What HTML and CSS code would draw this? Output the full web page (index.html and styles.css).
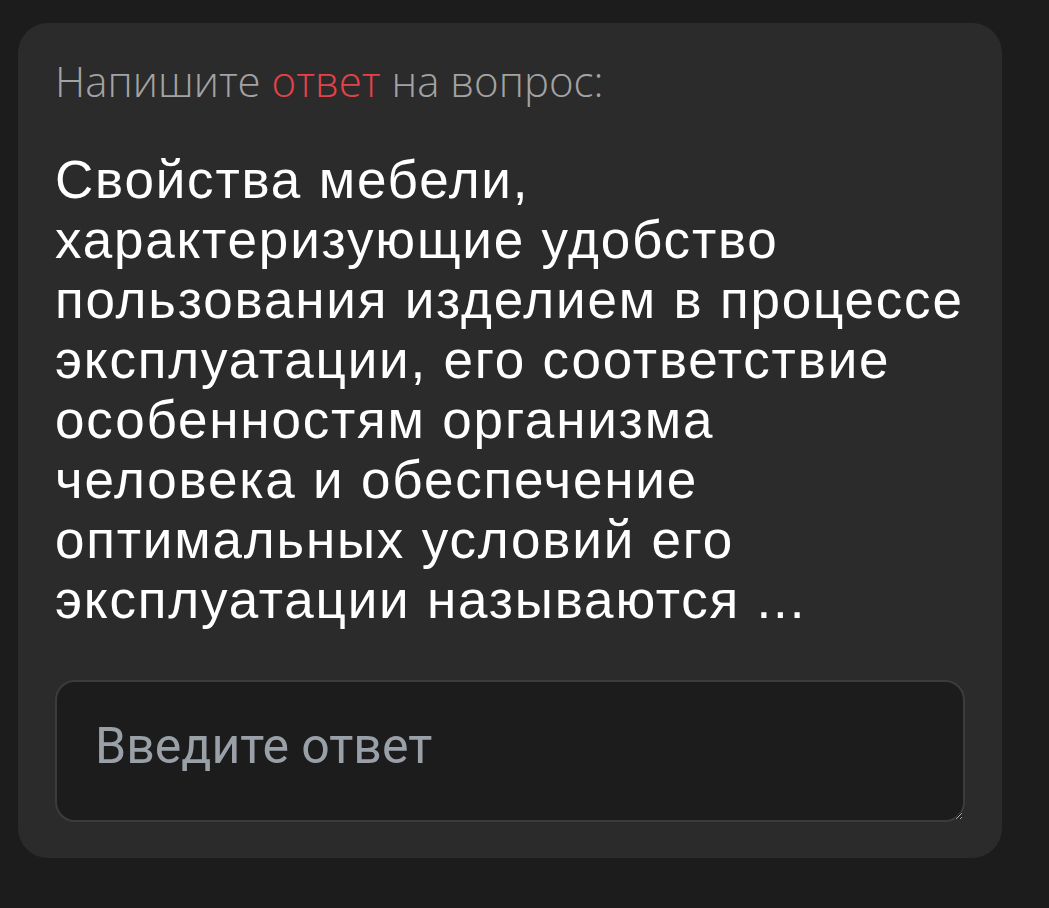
FILE: index.html
```html
<!DOCTYPE html>
<html lang="ru">
<head>
    <meta charset="UTF-8">
    <meta name="viewport" content="width=device-width, initial-scale=1.0">
    <title>Вопрос</title>
    <link rel="stylesheet" href="styles.css">
</head>
<body>
    <div class="card">
        <div class="hint">Напишите <span class="accent">ответ</span> на вопрос:</div>
        <div class="question">Свойства мебели,<br>характеризующие удобство<br>пользования изделием в процессе<br>эксплуатации, его соответствие<br>особенностям организма<br>человека и обеспечение<br>оптимальных условий его<br>эксплуатации называются ...</div>
        <textarea class="answer" placeholder="Введите ответ"></textarea>
    </div>
</body>
</html>
```

FILE: styles.css
```css
body {
    margin: 0;
    padding: 23px 47px 0 18px;
    background: #1c1c1c;
    font-family: "Open Sans", "Noto Sans", sans-serif;
}
.card {
    background: #2b2b2b;
    border-radius: 30px;
    padding: 33px 37px 36px;
}
.hint {
    font-size: 42px;
    font-weight: 300;
    color: #a3a3a3;
    line-height: 50px;
    white-space: nowrap;
}
.accent {
    color: #e2434b;
}
.question {
    margin-top: 44px;
    font-family: "Liberation Sans", Arial, sans-serif;
    font-size: 53px;
    letter-spacing: 1.8px;
    line-height: 60px;
    color: #ffffff;
    white-space: nowrap;
}
.answer {
    display: block;
    box-sizing: border-box;
    width: 910px;
    height: 142px;
    margin-top: 50px;
    padding: 35px 38px;
    background: #1c1c1c;
    border: 2px solid #3c3c3c;
    border-radius: 20px;
    color: #fff;
    font-family: Roboto, sans-serif;
    font-size: 50px;
    outline: none;
}
.answer::placeholder {
    color: #9aa0a8;
}
```
